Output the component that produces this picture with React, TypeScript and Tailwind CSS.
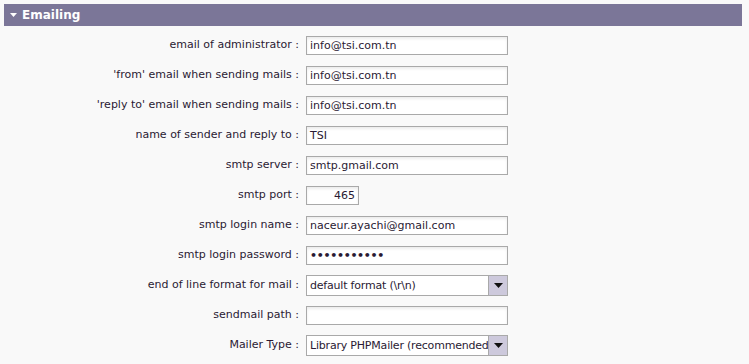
import React from "react";

type Row = {
  label: string;
  kind: "text" | "port" | "password" | "select";
  value: string;
};

const rows: Row[] = [
  { label: "email of administrator :", kind: "text", value: "info@tsi.com.tn" },
  { label: "'from' email when sending mails :", kind: "text", value: "info@tsi.com.tn" },
  { label: "'reply to' email when sending mails :", kind: "text", value: "info@tsi.com.tn" },
  { label: "name of sender and reply to :", kind: "text", value: "TSI" },
  { label: "smtp server :", kind: "text", value: "smtp.gmail.com" },
  { label: "smtp port :", kind: "port", value: "465" },
  { label: "smtp login name :", kind: "text", value: "naceur.ayachi@gmail.com" },
  { label: "smtp login password :", kind: "password", value: "•••••••••••" },
  { label: "end of line format for mail :", kind: "select", value: "default format (\\r\\n)" },
  { label: "sendmail path :", kind: "text", value: "" },
  { label: "Mailer Type :", kind: "select", value: "Library PHPMailer (recommended)" },
];

const Field: React.FC<{ row: Row }> = ({ row }) => {
  if (row.kind === "select") {
    return (
      <div className="flex h-[21px] w-[202px] border border-[#a9a9a9] bg-white">
        <div className="flex-1 overflow-hidden whitespace-nowrap pl-[3px] leading-[19px] tracking-[-0.2px] text-[#2a1a33]">{row.value}</div>
        <div className="flex w-[19px] items-center justify-center border-l border-[#a9a9a9] bg-[#cdc9dc]">
          <svg width="9" height="5" viewBox="0 0 9 5">
            <path d="M0 0h9L4.5 5z" fill="#111" />
          </svg>
        </div>
      </div>
    );
  }
  const width = row.kind === "port" ? "w-[53px]" : "w-[202px]";
  return (
    <div
      className={`h-[19px] ${width} border border-[#a9a9a9] bg-white px-[3px] leading-[17px] text-[#2a1a33] shadow-[inset_0_2px_3px_rgba(0,0,0,0.08)] ${
        row.kind === "port" ? "text-right" : ""
      } ${row.kind === "password" ? "font-bold tracking-[-0.3px]" : ""}`}
    >
      {row.value}
    </div>
  );
};

export default function App() {
  return (
    <div className="min-h-[364px] w-[749px] bg-[#f9f9f9] p-[4px] font-['DejaVu_Sans',Verdana,sans-serif] text-[11px] text-[#2a1a33]">
      <div className="flex h-[22px] w-[738px] items-center bg-[#7b7698] pl-[6px] text-[12px] font-bold text-white">
        <svg width="7" height="4" viewBox="0 0 7 4" className="mr-[5px]">
          <path d="M0 0h7L3.5 4z" fill="#fff" />
        </svg>
        Emailing
      </div>
      <div className="mt-[4px]">
        {rows.map((row) => (
          <div key={row.label} className="flex h-[30px] items-center">
            <div className="w-[302px] pr-[7px] text-right">{row.label}</div>
            <Field row={row} />
          </div>
        ))}
      </div>
    </div>
  );
}
